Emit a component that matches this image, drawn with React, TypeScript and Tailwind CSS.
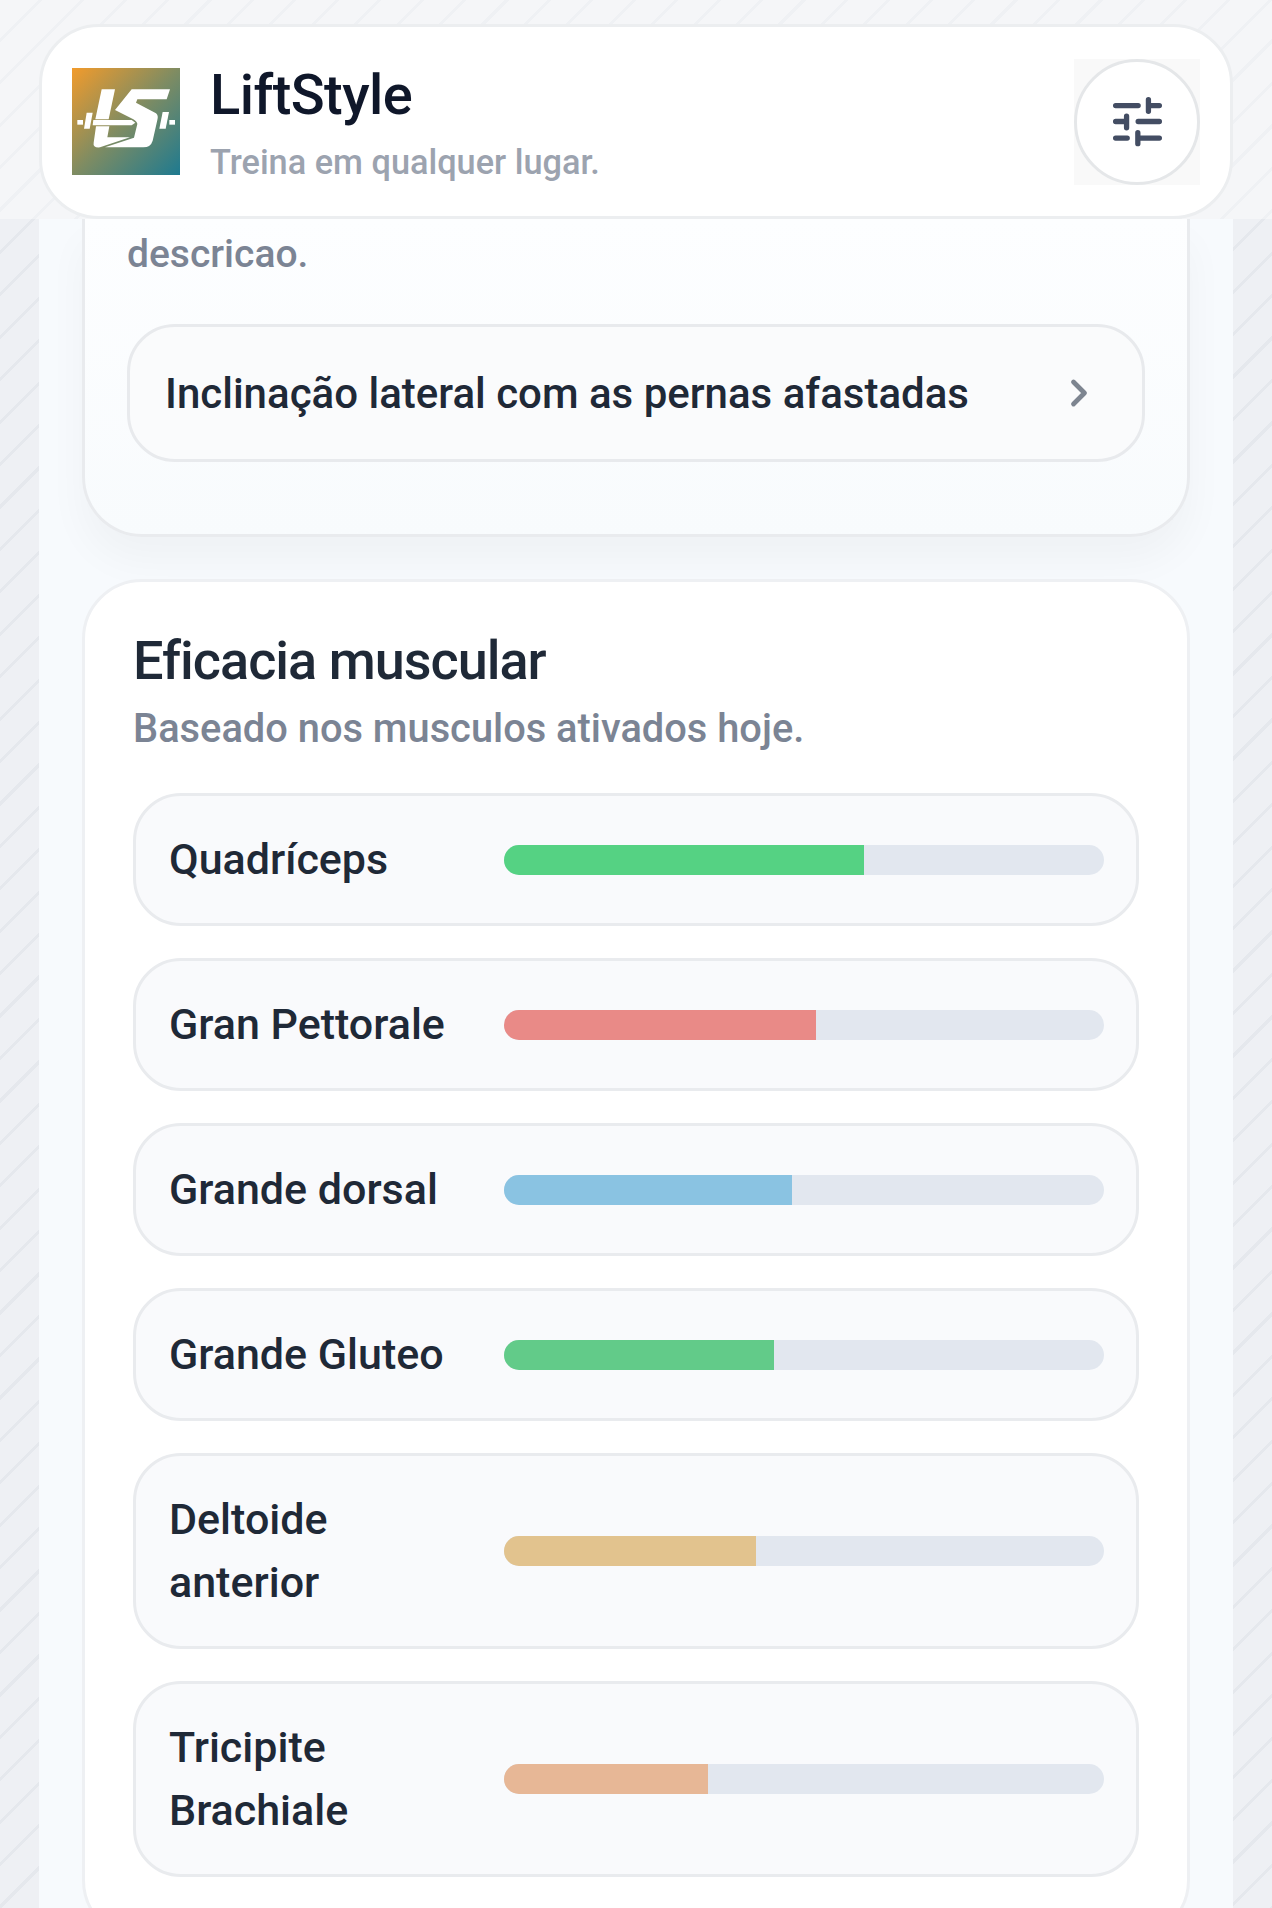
import React from 'react';
import { ChevronRight } from 'lucide-react';

const muscles = [
  { name: 'Quadríceps', pct: 60, color: '#55d283' },
  { name: 'Gran Pettorale', pct: 52, color: '#e98a87' },
  { name: 'Grande dorsal', pct: 48, color: '#8ac3e2' },
  { name: 'Grande Gluteo', pct: 45, color: '#62cb89' },
  { name: 'Deltoide anterior', pct: 42, color: '#e2c38e' },
  { name: 'Tricipite Brachiale', pct: 34, color: '#e7b796' },
];

function Logo() {
  return (
    <div className="w-[108px] h-[107px] shrink-0 bg-[linear-gradient(135deg,#f29b2c,#7f8c62_50%,#1e7a90)]">
      <svg viewBox="66 54 324 321" className="w-full h-full" fill="#fff">
        {/* dumbbell */}
        <rect x="82" y="210" width="17" height="14" />
        <rect x="358" y="210" width="17" height="14" />
        <path d="M110 188 L128 188 L119 236 L102 236 Z" />
        <path d="M338 186 L357 186 L347 236 L328 236 Z" />
        <path d="M130 210 L245 210 L256 218 L245 226 L128 226 Z" />
        {/* L */}
        <path d="M155 118 L195 118 L176 208 L136 208 Z" />
        <path d="M138 229 L178 229 L172 262 L240 262 L150 292 Q128 294 131 278 Z" />
        {/* S */}
        <path d="M245 118 L360 118 L350 148 L262 148 L258 158 L318 190 Q326 196 322 210 L308 272 Q302 292 280 292 L165 292 L252 263 L262 222 Q262 216 250 208 L195 180 Z" />
      </svg>
    </div>
  );
}

function TuneIcon() {
  return (
    <svg viewBox="150 165 160 160" className="w-[53px] h-[53px]" fill="none" stroke="#434d63" strokeWidth="16" strokeLinecap="round">
      <path d="M164 197 H232 M263 179 V214 M263 197 H296" />
      <path d="M164 245 H197 M197 229 V264 M232 245 H296" />
      <path d="M164 295 H199 M231 279 V312 M231 295 H296" />
    </svg>
  );
}

function MuscleRow({ name, pct, color }: { name: string; pct: number; color: string }) {
  return (
    <div className="flex items-center rounded-[48px] border-[3px] border-[#e9ebee] bg-[#f9fafc] pl-[33px] pr-[32px] py-[32px]">
      <div className="w-[300px] mr-[35px] text-[43px] leading-[63px] font-medium text-[#1f2937]">{name}</div>
      <div className="flex-1 h-[30px] rounded-full bg-[#e2e7ef] overflow-hidden">
        <div className="h-full" style={{ width: `${pct}%`, backgroundColor: color }} />
      </div>
    </div>
  );
}

export default function App() {
  return (
    <div className="h-[1908px] overflow-hidden flex flex-col font-['Roboto',sans-serif] bg-[#eef0f4] bg-[repeating-linear-gradient(135deg,transparent_0_27px,#e5e8ed_27px_30px)]">
      {/* Top bar */}
      <header className="relative z-10 h-[219px] shrink-0 px-[39px] pt-[24px] bg-white/40">
        <div className="h-[195px] flex items-center justify-between rounded-[60px] border-[3px] border-[#eceef0] bg-white pl-[30px] pr-[30px]">
          <div className="flex items-center">
            <Logo />
            <div className="ml-[30px] pt-[3px]">
              <div className="text-[56px] leading-[68px] font-medium tracking-[-0.55px] text-[#0f172a]">LiftStyle</div>
              <div className="mt-[9px] text-[34.3px] leading-[48px] font-medium text-[#9ca3af]">Treina em qualquer lugar.</div>
            </div>
          </div>
          <div className="bg-[#f9f9f9]">
            <button className="w-[126px] h-[126px] rounded-full border-[3px] border-[#e5e7e9] bg-white flex items-center justify-center">
              <TuneIcon />
            </button>
          </div>
        </div>
      </header>

      {/* Page column */}
      <main className="flex-1 mx-[39px] px-[43px] bg-[#f7fafd]">
        <section className="rounded-b-[60px] border-x-[3px] border-b-[3px] border-[#e9ebee] bg-[linear-gradient(#fdfeff,#f8fbfd)] px-[42px] pt-[6px] pb-[72px] shadow-[0_24px_40px_rgba(15,23,42,0.035)]">
          <p className="text-[39px] leading-[58px] font-medium text-[#7b8494]">descricao.</p>
          <button className="mt-[41px] w-full h-[138px] flex items-center justify-between rounded-[48px] border-[3px] border-[#e8eaed] bg-[#fafbfc] pl-[35px] pr-[41px]">
            <span className="text-[42px] font-medium text-[#1f2937]">Inclinação lateral com as pernas afastadas</span>
            <ChevronRight className="w-[44px] h-[44px] text-[#7d8590]" strokeWidth={2.6} />
          </button>
        </section>

        <section className="relative mt-[42px] rounded-[60px] border-[3px] border-[#eef0f3] bg-white px-[48px] pt-[46px] pb-[60px]">
          <h2 className="text-[54px] leading-[66px] font-medium tracking-[-1px] text-[#1f2937]">Eficacia muscular</h2>
          <p className="mt-[11px] text-[39.8px] leading-[48px] font-medium text-[#7b8494]">Baseado nos musculos ativados hoje.</p>
          <div className="mt-[40px] flex flex-col gap-[32px]">
            {muscles.map((m) => (
              <MuscleRow key={m.name} name={m.name} pct={m.pct} color={m.color} />
            ))}
          </div>
        </section>
      </main>
    </div>
  );
}
